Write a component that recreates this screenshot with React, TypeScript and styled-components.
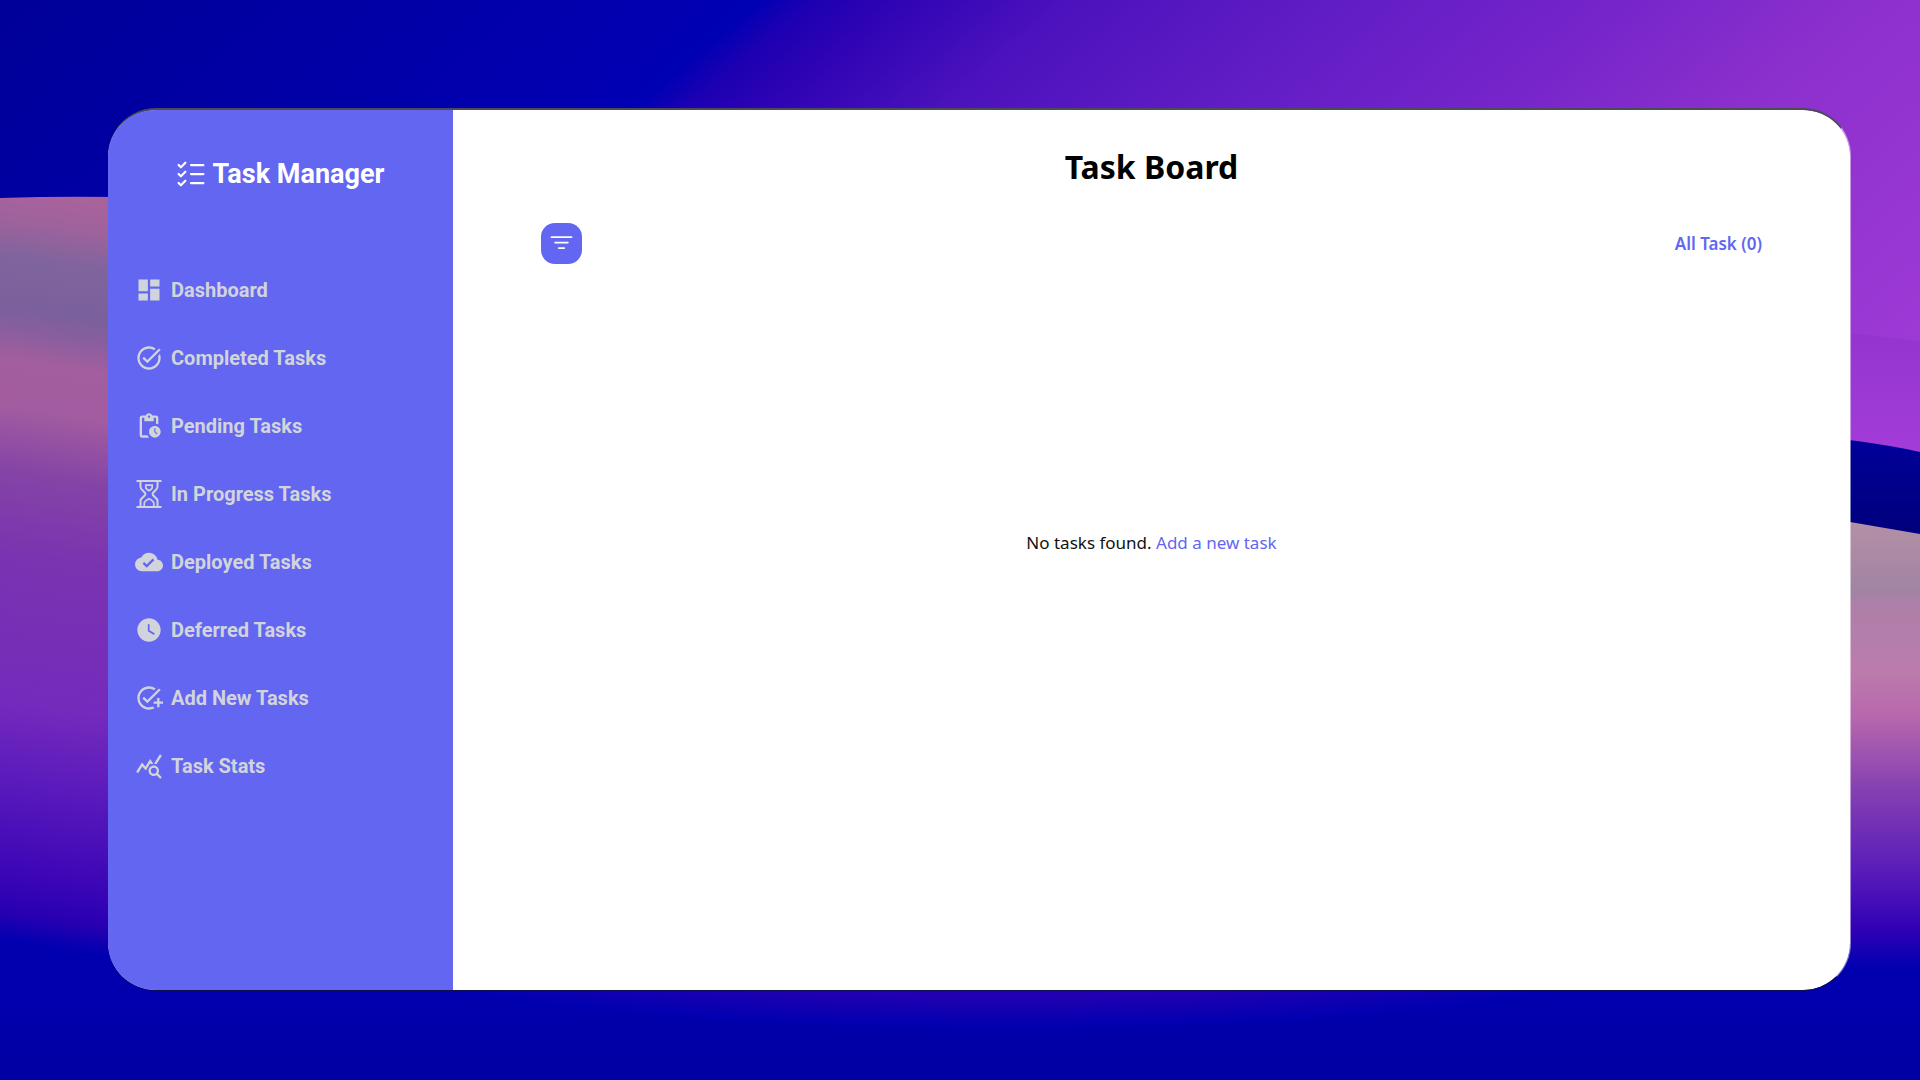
import React from 'react';
import styled, { createGlobalStyle } from 'styled-components';
import {
  MdAddTask,
  MdCloudDone,
  MdDashboard,
  MdOutlinePendingActions,
  MdQueryStats,
  MdTaskAlt,
  MdWatchLater,
} from 'react-icons/md';
import { PiListChecks } from 'react-icons/pi';
import { BsFilter } from 'react-icons/bs';

const indigo = '#6366f1';

const GlobalStyle = createGlobalStyle`
  * { box-sizing: border-box; }
  body {
    margin: 0;
    background: #0000a8;
    font-family: 'Noto Sans', 'Open Sans', sans-serif;
  }
`;

const Page = styled.div`
  position: relative;
  min-height: 100vh;
  display: flex;
  padding: 108px 69px 89px 108px;
`;

const Backdrop = styled.svg`
  position: absolute;
  inset: 0;
  width: 100%;
  height: 100%;
`;

const Panel = styled.div`
  position: relative;
  flex: 1;
  display: flex;
  overflow: hidden;
  border-top: 2px solid #4b4b55;
  border-right: 1px solid rgba(255, 255, 255, 0.5);
  border-bottom: 1px solid #0c0c50;
  border-radius: 48px;
  background: #fff;
  background-clip: padding-box;
`;

const Sidebar = styled.aside`
  flex: none;
  width: 345px;
  background: ${indigo};
  font-family: Roboto, sans-serif;
`;

const Brand = styled.div`
  display: flex;
  align-items: center;
  justify-content: center;
  gap: 4px;
  padding: 46px 4px 0 0;
  color: #fff;
  font-size: 27px;
  line-height: 36px;
  font-weight: 700;
`;

const NavList = styled.ul`
  display: flex;
  flex-direction: column;
  gap: 40px;
  margin: 0;
  padding: 84px 27px 0;
  list-style: none;
`;

const NavLink = styled.a`
  display: flex;
  align-items: center;
  gap: 8px;
  color: #d1d5db;
  font-size: 20px;
  line-height: 28px;
  font-weight: 700;
  text-decoration: none;
`;

const Board = styled.main`
  flex: 1;
  padding: 0 88px;
`;

const Title = styled.h1`
  margin: 0;
  padding-top: 37px;
  text-align: center;
  color: #000;
  font-size: 32px;
  line-height: 40px;
  font-weight: 700;
`;

const Toolbar = styled.div`
  display: flex;
  align-items: center;
  justify-content: space-between;
  margin-top: 36px;
`;

const FilterButton = styled.button`
  display: flex;
  padding: 6px;
  border: 0;
  border-radius: 14px;
  background: ${indigo};
  color: #fff;
  cursor: pointer;
`;

const Count = styled.span`
  color: ${indigo};
  font-size: 17px;
  line-height: 24px;
  font-weight: 600;
`;

const Empty = styled.p`
  margin: 267px 0 0;
  text-align: center;
  color: #111;
  font-size: 17px;
  line-height: 24px;
`;

const AddLink = styled.a`
  color: ${indigo};
  text-decoration: none;
`;

function Hourglass({ size = 28 }: { size?: number }) {
  return (
    <svg width={size} height={size} viewBox="0 0 28 28" fill="none" stroke="currentColor" strokeWidth="2" aria-hidden="true">
      <path d="M1.500 1h25M1.500 27h25" />
      <path d="M5.500 1v6c0 3.400 5 4.600 5 7s-5 3.600-5 7v6M22.500 1v6c0 3.400-5 4.600-5 7s5 3.600 5 7v6" />
      <path strokeWidth="1.700" d="M10.800 5.200h6.400v2.200c0 1.200-1.800 2.500-3.200 3.400-1.400-.9-3.200-2.200-3.200-3.400z" />
      <path strokeWidth="1.700" d="M9.200 26v-2.400c0-2 2.600-3.700 4.800-4.800 2.200 1.100 4.800 2.800 4.800 4.800V26" />
    </svg>
  );
}

const links = [
  { label: 'Dashboard', Icon: MdDashboard },
  { label: 'Completed Tasks', Icon: MdTaskAlt },
  { label: 'Pending Tasks', Icon: MdOutlinePendingActions },
  { label: 'In Progress Tasks', Icon: Hourglass },
  { label: 'Deployed Tasks', Icon: MdCloudDone },
  { label: 'Deferred Tasks', Icon: MdWatchLater },
  { label: 'Add New Tasks', Icon: MdAddTask },
  { label: 'Task Stats', Icon: MdQueryStats },
];

type Stop = [number, string];

const stopList = (stops: Stop[], from: number, to: number) =>
  stops.map(([y, color]) => <stop key={y} offset={(y - from) / (to - from)} stopColor={color} />);

const leftWave: Stop[] = [
  [190, '#a8629c'], [215, '#a0629c'], [255, '#80649c'], [305, '#7a609c'], [328, '#8a5e9e'],
  [356, '#a25e9e'], [405, '#a25ca0'], [470, '#8444a6'], [550, '#7a34b0'], [700, '#742abc'],
  [780, '#5a1abc'], [870, '#3c06b6'], [910, '#2800b2'], [940, '#0000b0'], [1080, '#0000a2'],
];

const rightWave: Stop[] = [
  [520, '#b490a6'], [592, '#a084a2'], [602, '#ac80a8'], [670, '#bc7cac'], [715, '#b868ac'],
  [790, '#8440b2'], [870, '#5a1cba'], [930, '#3000b4'], [968, '#0000b0'], [1080, '#0000a2'],
];

const sky: Stop[] = [
  [0, '#000098'], [500, '#0000b4'], [535, '#1c00b2'], [595, '#3004b4'], [710, '#4c12bd'],
  [910, '#641ec6'], [1072, '#7625ca'], [1235, '#8c30cd'], [1600, '#a23cd8'],
];

function Wallpaper() {
  return (
    <Backdrop viewBox="0 0 1920 1080" preserveAspectRatio="none" aria-hidden="true">
      <defs>
        <linearGradient id="sky" gradientUnits="userSpaceOnUse" x1="0" y1="0" x2="1040" y2="1200">
          {stopList(sky, 0, 1600)}
        </linearGradient>
        <linearGradient id="left" gradientUnits="userSpaceOnUse" x1="0" y1="190" x2="0" y2="1080" gradientTransform="skewY(9)">
          {stopList(leftWave, 190, 1080)}
        </linearGradient>
        <linearGradient id="right" gradientUnits="userSpaceOnUse" x1="0" y1="520" x2="0" y2="1080">
          {stopList(rightWave, 520, 1080)}
        </linearGradient>
        <linearGradient id="band" x1="0" y1="0" x2="0" y2="1">
          <stop offset="0" stopColor="#9234cc" />
          <stop offset="1" stopColor="#a43cda" />
        </linearGradient>
        <linearGradient id="navy" x1="0" y1="0" x2="0" y2="1">
          <stop offset="0" stopColor="#00009c" />
          <stop offset="1" stopColor="#00007c" />
        </linearGradient>
        <linearGradient id="floor" x1="0" y1="0" x2="0" y2="1">
          <stop offset="0" stopColor="#0000b0" />
          <stop offset="1" stopColor="#0000a4" />
        </linearGradient>
        <radialGradient id="glow">
          <stop offset="0" stopColor="#3200b4" />
          <stop offset="0.6" stopColor="#2000b2" />
          <stop offset="1" stopColor="#0000b0" />
        </radialGradient>
      </defs>
      <rect width="1920" height="1080" fill="url(#sky)" />
      <path d="M1600 316L1850 333L1920 341V460H1600z" fill="url(#band)" />
      <path d="M1600 430Q1800 426 1920 452V540H1600z" fill="url(#navy)" />
      <path d="M0 198Q60 196 120 197Q500 200 700 400V1080H0z" fill="url(#left)" />
      <path d="M1500 460L1850 522L1920 534V1080H1500z" fill="url(#right)" />
      <rect y="980" width="1920" height="100" fill="url(#floor)" />
      <ellipse cx="1010" cy="955" rx="640" ry="72" fill="url(#glow)" />
    </Backdrop>
  );
}

export default function App() {
  return (
    <Page>
      <GlobalStyle />
      <Wallpaper />
      <Panel>
        <Sidebar>
          <Brand>
            <PiListChecks size={36} />
            <span>Task Manager</span>
          </Brand>
          <nav>
            <NavList>
              {links.map(({ label, Icon }) => (
                <li key={label}>
                  <NavLink href="#">
                    <Icon size={28} />
                    {label}
                  </NavLink>
                </li>
              ))}
            </NavList>
          </nav>
        </Sidebar>
        <Board>
          <Title>Task Board</Title>
          <Toolbar>
            <FilterButton type="button" aria-label="Filter tasks">
              <BsFilter size={29} />
            </FilterButton>
            <Count>All Task (0)</Count>
          </Toolbar>
          <Empty>
            No tasks found. <AddLink href="#">Add a new task</AddLink>
          </Empty>
        </Board>
      </Panel>
    </Page>
  );
}
